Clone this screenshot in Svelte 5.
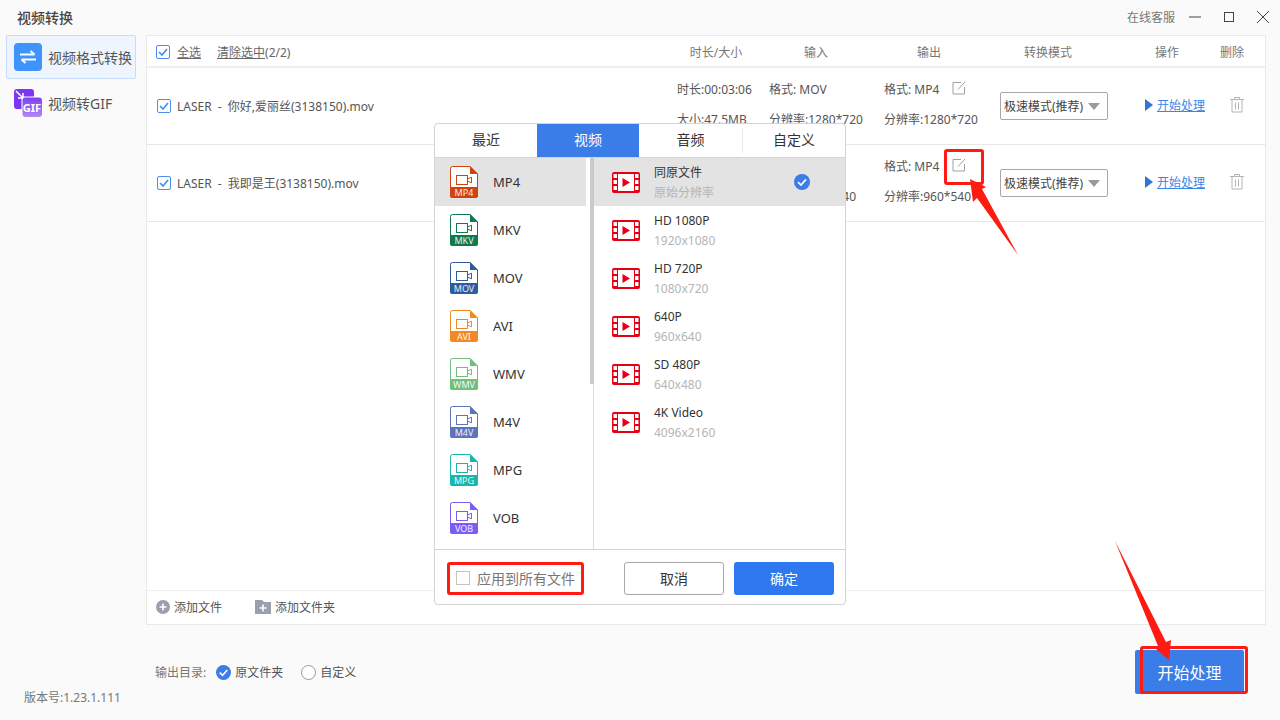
<script>
	// the second row's duration and size sit behind the picker in this view
	const files = [
		{ name: 'LASER - 你好,爱丽丝(3138150).mov', time: '00:03:06', size: '47.5MB', inFmt: 'MOV', inRes: '1280*720', outRes: '1280*720' },
		{ name: 'LASER - 我即是王(3138150).mov', inFmt: 'MOV', inRes: '960*540', outRes: '960*540' }
	];

	const tabs = ['最近', '视频', '音频', '自定义'];

	const formats = [
		{ name: 'MP4', color: '#d2420f' },
		{ name: 'MKV', color: '#0e7a4e' },
		{ name: 'MOV', color: '#2f5a9e' },
		{ name: 'AVI', color: '#f28a24' },
		{ name: 'WMV', color: '#6fbf7f' },
		{ name: 'M4V', color: '#5b74bb' },
		{ name: 'MPG', color: '#1ab5ae' },
		{ name: 'VOB', color: '#7b5cf5' }
	];

	const presets = [
		{ name: '同原文件', res: '原始分辨率' },
		{ name: 'HD 1080P', res: '1920x1080' },
		{ name: 'HD 720P', res: '1080x720' },
		{ name: '640P', res: '960x640' },
		{ name: 'SD 480P', res: '640x480' },
		{ name: '4K Video', res: '4096x2160' }
	];
</script>

{#snippet check()}
	<span class="check">
		<svg width="10" height="8" viewBox="0 0 10 8"><path d="M1 4l3 3 5-6" fill="none" stroke="#3f8cf0" stroke-width="1.6" /></svg>
	</span>
{/snippet}

{#snippet edit()}
	<svg class="edit" width="14" height="14" viewBox="0 0 14 14">
		<path d="M9 1.500H1v11.500h11.500V6" fill="none" stroke="#a0a0a0" stroke-width="1" />
		<path d="M6 8.500L13 1" fill="none" stroke="#a0a0a0" stroke-width="1" />
	</svg>
{/snippet}

{#snippet bluecheck(size)}
	<svg width={size} height={size} viewBox="0 0 16 16">
		<circle cx="8" cy="8" r="8" fill="#3a7ce8" />
		<path d="M4 8.200l3 2.800 5-5.600" fill="none" stroke="#fff" stroke-width="1.700" />
	</svg>
{/snippet}

<div class="app">
	<header class="titlebar">
		<span class="title">视频转换</span>
		<div class="winctl">
			<span class="service">在线客服</span>
			<svg width="14" height="14" viewBox="0 0 14 14"><path d="M1 7h12" stroke="#444" stroke-width="1" /></svg>
			<svg width="14" height="14" viewBox="0 0 14 14"><rect x="2.500" y="2.500" width="9" height="9" fill="none" stroke="#444" /></svg>
			<svg width="14" height="14" viewBox="0 0 14 14"><path d="M1 1l12 12M13 1L1 13" stroke="#444" stroke-width="1" /></svg>
		</div>
	</header>

	<div class="body">
		<aside class="sidebar">
			<div class="nav">
				<div class="nav-item active">
					<span class="nav-icon">
						<svg width="16" height="14" viewBox="0 0 16 14">
							<path d="M0 4.500h14.500M10.500 1L14.500 4.500" fill="none" stroke="#fff" stroke-width="2" />
							<path d="M16 9.500H1.500M5.500 13L1.500 9.500" fill="none" stroke="#fff" stroke-width="2" />
						</svg>
					</span>
					<span>视频格式转换</span>
				</div>
				<div class="nav-item">
					<svg class="gif" width="28" height="28" viewBox="0 0 28 28">
						<defs>
							<linearGradient id="gifg" x1="0" y1="0" x2="0" y2="1">
								<stop offset="0" stop-color="#7b3ff2" />
								<stop offset="1" stop-color="#b18af5" />
							</linearGradient>
						</defs>
						<rect x="0" y="0" width="20" height="20" rx="3" fill="#7a35f5" />
						<path d="M2 2l7 7M9 4v5H4" fill="none" stroke="#fff" stroke-width="1.500" />
						<rect x="7.500" y="7.500" width="20.500" height="20.500" rx="3" fill="#fff" />
						<rect x="8.500" y="8.500" width="19.500" height="19.500" rx="3" fill="url(#gifg)" />
						<text x="18" y="22.500" text-anchor="middle" class="giftext">GIF</text>
					</svg>
					<span>视频转GIF</span>
				</div>
			</div>
			<div class="version">版本号:1.23.1.111</div>
		</aside>

		<main class="main">
			<section class="panel">
				<div class="list-head">
					<div class="head-left">
						{@render check()}
						<u>全选</u>
						<span class="clear"><u>清除选中</u>(2/2)</span>
					</div>
					<span class="hc c1">时长/大小</span>
					<span class="hc c2">输入</span>
					<span class="hc c3">输出</span>
					<span class="hc c4">转换模式</span>
					<span class="hc c5">操作</span>
					<span class="hc c6">删除</span>
				</div>

				<div class="rows">
					{#each files as f}
						<div class="row">
							<div class="fname">
								{@render check()}
								<span>{f.name}</span>
							</div>
							<div class="cell">
								{#if f.time}
									<span>时长:{f.time}</span>
									<span>大小:{f.size}</span>
								{/if}
							</div>
							<div class="cell">
								<span>格式: {f.inFmt}</span>
								<span>分辨率:{f.inRes}</span>
							</div>
							<div class="cell">
								<span class="fmt">格式: MP4 {@render edit()}</span>
								<span>分辨率:{f.outRes}</span>
							</div>
							<div class="mode">
								<div class="select">极速模式(推荐)<i class="caret"></i></div>
							</div>
							<div class="action">
								<i class="play"></i><a href="#start">开始处理</a>
							</div>
							<div class="del">
								<svg width="16" height="17" viewBox="0 0 16 17" fill="none" stroke="#b4b4b4">
									<path d="M1 3.500h14M5.500 3.500V1.500h5v2M3 3.500v12.500h10V3.500M6.500 6.500v7M9.500 6.500v7" />
								</svg>
							</div>
						</div>
					{/each}
				</div>

				<div class="adds">
					<span class="add">
						<svg width="14" height="14" viewBox="0 0 14 14">
							<circle cx="7" cy="7" r="7" fill="#9a9fb0" />
							<path d="M3.500 7h7M7 3.500v7" stroke="#fff" stroke-width="1.600" />
						</svg>
						添加文件
					</span>
					<span class="add">
						<svg width="16" height="14" viewBox="0 0 16 14">
							<path d="M0 0h7l2 2h7v12H0z" fill="#9a9fb0" />
							<path d="M4.500 8h7M8 4.500v7" stroke="#fff" stroke-width="1.600" />
						</svg>
						添加文件夹
					</span>
				</div>
			</section>

			<div class="output">
				<div class="dir">
					<span class="dir-label">输出目录:</span>
					<label class="radio">{@render bluecheck(15)}原文件夹</label>
					<label class="radio"><i class="circle"></i>自定义</label>
				</div>
				<button class="start">开始处理</button>
			</div>
		</main>
	</div>

	<!-- format picker -->
	<div class="popup">
		<div class="tabs">
			{#each tabs as t, i}
				<div class="tab" class:on={i === 1}>{t}</div>
			{/each}
		</div>
		<div class="picker">
			<div class="fmt-col">
				{#each formats as f, i}
					<div class="fmt-row" class:sel={i === 0}>
						<svg width="28" height="32" viewBox="0 0 28 32">
							<path d="M2.500.5H20L27.500 8v21.500a2 2 0 0 1-2 2h-23a2 2 0 0 1-2-2v-27a2 2 0 0 1 2-2z" fill="#fff" stroke={f.color} />
							<path d="M20 0l8 8h-8z" fill={f.color} />
							<path d="M0 21h28v8.500a2.500 2.500 0 0 1-2.500 2.500h-23A2.500 2.500 0 0 1 0 29.500z" fill={f.color} />
							<rect x="6.500" y="9.500" width="11" height="9" fill="none" stroke={f.color} />
							<path d="M17.500 13l4-1.800v5.600l-4-1.800" fill="none" stroke={f.color} />
							<text x="14" y="30" text-anchor="middle" class="badge">{f.name}</text>
						</svg>
						<span>{f.name}</span>
					</div>
				{/each}
			</div>
			<div class="scroll"><i></i></div>
			<div class="preset-col">
				{#each presets as p, i}
					<div class="preset" class:sel={i === 0}>
						<svg width="28" height="21" viewBox="0 0 28 21">
							<rect width="28" height="21" rx="2" fill="#e60012" />
							<rect x="6" y="2" width="16" height="17" fill="#fff" />
							{#each [2, 8, 14] as y}
								<rect x="1.500" {y} width="3.500" height="4" rx=".5" fill="#fff" />
								<rect x="23" {y} width="3.500" height="4" rx=".5" fill="#fff" />
							{/each}
							<path d="M10.500 6l7.500 4.500-7.500 4.500z" fill="#e60012" />
						</svg>
						<div class="preset-text">
							<span>{p.name}</span>
							<small>{p.res}</small>
						</div>
						{#if i === 0}
							<span class="tick">{@render bluecheck(16)}</span>
						{/if}
					</div>
				{/each}
			</div>
		</div>
		<div class="popup-foot">
			<label class="apply"><i class="box"></i>应用到所有文件</label>
			<div class="btns">
				<button class="cancel">取消</button>
				<button class="ok">确定</button>
			</div>
		</div>
	</div>

	<!-- annotations drawn over the screenshot -->
	<i class="mark m1"></i>
	<i class="mark m2"></i>
	<i class="mark m3"></i>
	<svg class="arrows" width="1280" height="720" viewBox="0 0 1280 720">
		<path d="M1018 255L982 189 986 187 970 179 973 202 977 198z" fill="#ff1a12" />
		<path d="M1115 541L1166 642 1171 640 1169 660 1155 648 1158 646z" fill="#ff1a12" />
	</svg>
</div>

<style>
	:global(body) {
		margin: 0;
		font-family: 'Noto Sans', 'Noto Sans CJK SC', sans-serif;
		font-size: 12px;
		color: #555;
	}

	.app {
		position: relative;
		width: 1280px;
		height: 720px;
		overflow: hidden;
		background: #fafafa;
		display: flex;
		flex-direction: column;
	}

	i {
		display: block;
	}

	.titlebar {
		height: 35px;
		box-sizing: border-box;
		flex: none;
		display: flex;
		align-items: center;
		justify-content: space-between;
		padding: 0 10px 2px 17px;
	}

	.title {
		font-size: 14px;
		font-weight: 500;
		color: #444;
	}

	.winctl {
		display: flex;
		align-items: center;
		gap: 20px;
	}

	.service {
		color: #777;
		margin-right: -7px;
	}

	.body {
		flex: 1;
		display: flex;
		min-height: 0;
	}

	.sidebar {
		width: 146px;
		flex: none;
		display: flex;
		flex-direction: column;
		justify-content: space-between;
	}

	.nav-item {
		width: 130px;
		height: 44px;
		box-sizing: border-box;
		margin-left: 6px;
		padding-left: 7px;
		display: flex;
		align-items: center;
		gap: 6px;
		font-size: 14px;
		white-space: nowrap;
		border: 1px solid transparent;
		border-radius: 2px;
	}

	.nav-item.active {
		background: #eef5ff;
		border-color: #c5dcfb;
		margin-bottom: 2px;
	}

	.nav-icon {
		width: 28px;
		height: 28px;
		border-radius: 4px;
		background: #3f93fd;
		display: flex;
		align-items: center;
		justify-content: center;
	}

	.giftext {
		font-size: 11px;
		font-weight: 700;
		fill: #fff;
	}

	.version {
		margin: 0 0 14px 24px;
		color: #777;
	}

	.main {
		flex: 1;
		display: flex;
		flex-direction: column;
		padding-right: 14px;
		min-width: 0;
	}

	.panel {
		height: 590px;
		box-sizing: border-box;
		flex: none;
		background: #fff;
		border: 1px solid #eaeaea;
		display: flex;
		flex-direction: column;
	}

	.list-head {
		height: 32px;
		box-sizing: border-box;
		padding-top: 1px;
		flex: none;
		display: flex;
		align-items: center;
		border-bottom: 2px solid #eeeeee;
		color: #777;
	}

	.head-left {
		width: 519px;
		flex: none;
		display: flex;
		align-items: center;
		padding-left: 9px;
		gap: 7px;
		box-sizing: border-box;
		color: #666;
	}

	.clear {
		margin-left: 9px;
	}

	.hc {
		text-align: center;
		flex: none;
	}

	.c1 { width: 100px; }
	.c2 { width: 100px; }
	.c3 { width: 126px; }
	.c4 { width: 112px; }
	.c5 { width: 64px; margin-left: 31px; }
	.c6 { width: 66px; }

	.check {
		width: 14px;
		height: 14px;
		box-sizing: border-box;
		flex: none;
		border: 1px solid #4a90f0;
		border-radius: 2px;
		background: #fff;
		display: flex;
		align-items: center;
		justify-content: center;
	}

	.rows {
		flex: 1;
		min-height: 0;
	}

	.row {
		height: 77px;
		box-sizing: border-box;
		border-bottom: 1px solid #e8e8e8;
		display: grid;
		grid-template-columns: 530px 92px 115px 116px 144px 85px 1fr;
		align-items: center;
	}

	.fname {
		display: flex;
		align-items: center;
		gap: 6px;
		padding-left: 10px;
		word-spacing: 3px;
	}

	.cell {
		display: flex;
		flex-direction: column;
		gap: 13px;
		line-height: 17px;
		margin-top: -4px;
		white-space: nowrap;
	}

	.fmt {
		display: flex;
		align-items: center;
	}

	.edit {
		margin-left: 13px;
		margin-top: -2px;
	}

	.select {
		width: 108px;
		height: 28px;
		box-sizing: border-box;
		border: 1px solid #a8a8a8;
		border-radius: 2px;
		background: #fff;
		padding: 0 7px 0 3px;
		display: flex;
		align-items: center;
		justify-content: space-between;
		color: #444;
	}

	.caret {
		width: 0;
		height: 0;
		border-left: 6px solid transparent;
		border-right: 6px solid transparent;
		border-top: 7px solid #9a9a9a;
	}

	.action {
		display: flex;
		align-items: center;
		gap: 4px;
		padding-left: 1px;
		margin-top: -3px;
	}

	.play {
		width: 0;
		height: 0;
		border-left: 8px solid #2f76d8;
		border-top: 6px solid transparent;
		border-bottom: 6px solid transparent;
	}

	.action a {
		color: #3a86e8;
	}

	.del svg {
		display: block;
		margin-top: -3px;
	}

	.adds {
		height: 34px;
		box-sizing: border-box;
		padding: 0 0 1px 9px;
		flex: none;
		border-top: 1px solid #eeeeee;
		display: flex;
		align-items: center;
		gap: 33px;
	}

	.add {
		display: flex;
		align-items: center;
		gap: 4px;
	}

	.output {
		flex: 1;
		display: flex;
		align-items: center;
		justify-content: space-between;
		padding: 0 22px 0 9px;
	}

	.dir {
		display: flex;
		align-items: center;
		margin-top: -1px;
	}

	.dir-label {
		color: #777;
		margin-right: 10px;
	}

	.radio {
		display: flex;
		align-items: center;
		gap: 4px;
		margin-right: 18px;
	}

	.circle {
		width: 15px;
		height: 15px;
		box-sizing: border-box;
		border: 1px solid #999;
		border-radius: 50%;
		background: #fff;
	}

	.start {
		width: 109px;
		height: 44px;
		margin-top: -1px;
		padding-bottom: 2px;
		border: none;
		border-radius: 2px;
		background: #3a7ce8;
		color: #fff;
		font: inherit;
		font-size: 16px;
	}

	.popup {
		position: absolute;
		left: 434px;
		top: 123px;
		width: 412px;
		height: 482px;
		box-sizing: border-box;
		background: #fff;
		border: 1px solid #d4d4d4;
		border-radius: 4px;
		display: flex;
		flex-direction: column;
		color: #333;
	}

	.tabs {
		height: 34px;
		flex: none;
		display: grid;
		grid-template-columns: 102px 102px 104px 1fr;
		border-bottom: 1px solid #d4d4d4;
		box-sizing: border-box;
		font-size: 14px;
		line-height: 1;
	}

	.tab {
		display: flex;
		align-items: center;
		justify-content: center;
		padding-bottom: 1px;
	}

	.tab:nth-child(3) {
		border-right: 1px solid #e8e8e8;
		margin: 4px 0;
	}

	.tab.on {
		background: #3a7ce8;
		color: #fff;
	}

	.picker {
		flex: 1;
		display: flex;
		min-height: 0;
	}

	.fmt-col {
		width: 155px;
		flex: none;
	}

	.fmt-row {
		width: 151px;
		height: 48px;
		display: flex;
		align-items: center;
		padding-left: 15px;
		box-sizing: border-box;
		gap: 15px;
		font-size: 13px;
	}

	.fmt-row.sel,
	.preset.sel {
		background: #e3e3e3;
	}

	.badge {
		font-size: 9px;
		fill: #fff;
		opacity: 0.9;
	}

	.scroll {
		width: 4px;
		box-sizing: border-box;
		flex: none;
		border-right: 1px solid #dcdcdc;
	}

	.scroll i {
		width: 4px;
		height: 226px;
		background: #c8cacd;
	}

	.preset-col {
		flex: 1;
	}

	.preset {
		height: 48px;
		display: flex;
		align-items: center;
		padding-left: 18px;
		gap: 14px;
		position: relative;
	}

	.preset-text {
		display: flex;
		flex-direction: column;
		gap: 3px;
		line-height: 17px;
	}

	.preset-text small {
		font-size: 12px;
		color: #b5b5b5;
	}

	.tick {
		position: absolute;
		left: 200px;
		top: 16px;
	}

	.popup-foot {
		height: 55px;
		box-sizing: border-box;
		flex: none;
		border-top: 1px solid #d4d4d4;
		display: flex;
		align-items: center;
		justify-content: space-between;
		padding: 2px 11px 0 21px;
	}

	.apply {
		display: flex;
		align-items: center;
		gap: 7px;
		color: #777;
		font-size: 14px;
	}

	.box {
		width: 14px;
		height: 14px;
		box-sizing: border-box;
		border: 1px solid #c4c4c4;
	}

	.btns {
		display: flex;
		gap: 10px;
	}

	.btns button {
		width: 100px;
		height: 33px;
		border-radius: 3px;
		font: inherit;
		font-size: 14px;
	}

	.cancel {
		background: #fff;
		border: 1px solid #a8a8a8;
		color: #333;
	}

	.ok {
		background: #2f78f0;
		border: none;
		color: #fff;
	}

	.mark {
		position: absolute;
		box-sizing: border-box;
		border: 3px solid #ff1a12;
		border-radius: 3px;
	}

	.m1 { left: 944px; top: 149px; width: 40px; height: 36px; }
	.m2 { left: 447px; top: 562px; width: 137px; height: 33px; }
	.m3 { left: 1140px; top: 646px; width: 108px; height: 48px; }

	.arrows {
		position: absolute;
		left: 0;
		top: 0;
		pointer-events: none;
	}
</style>
